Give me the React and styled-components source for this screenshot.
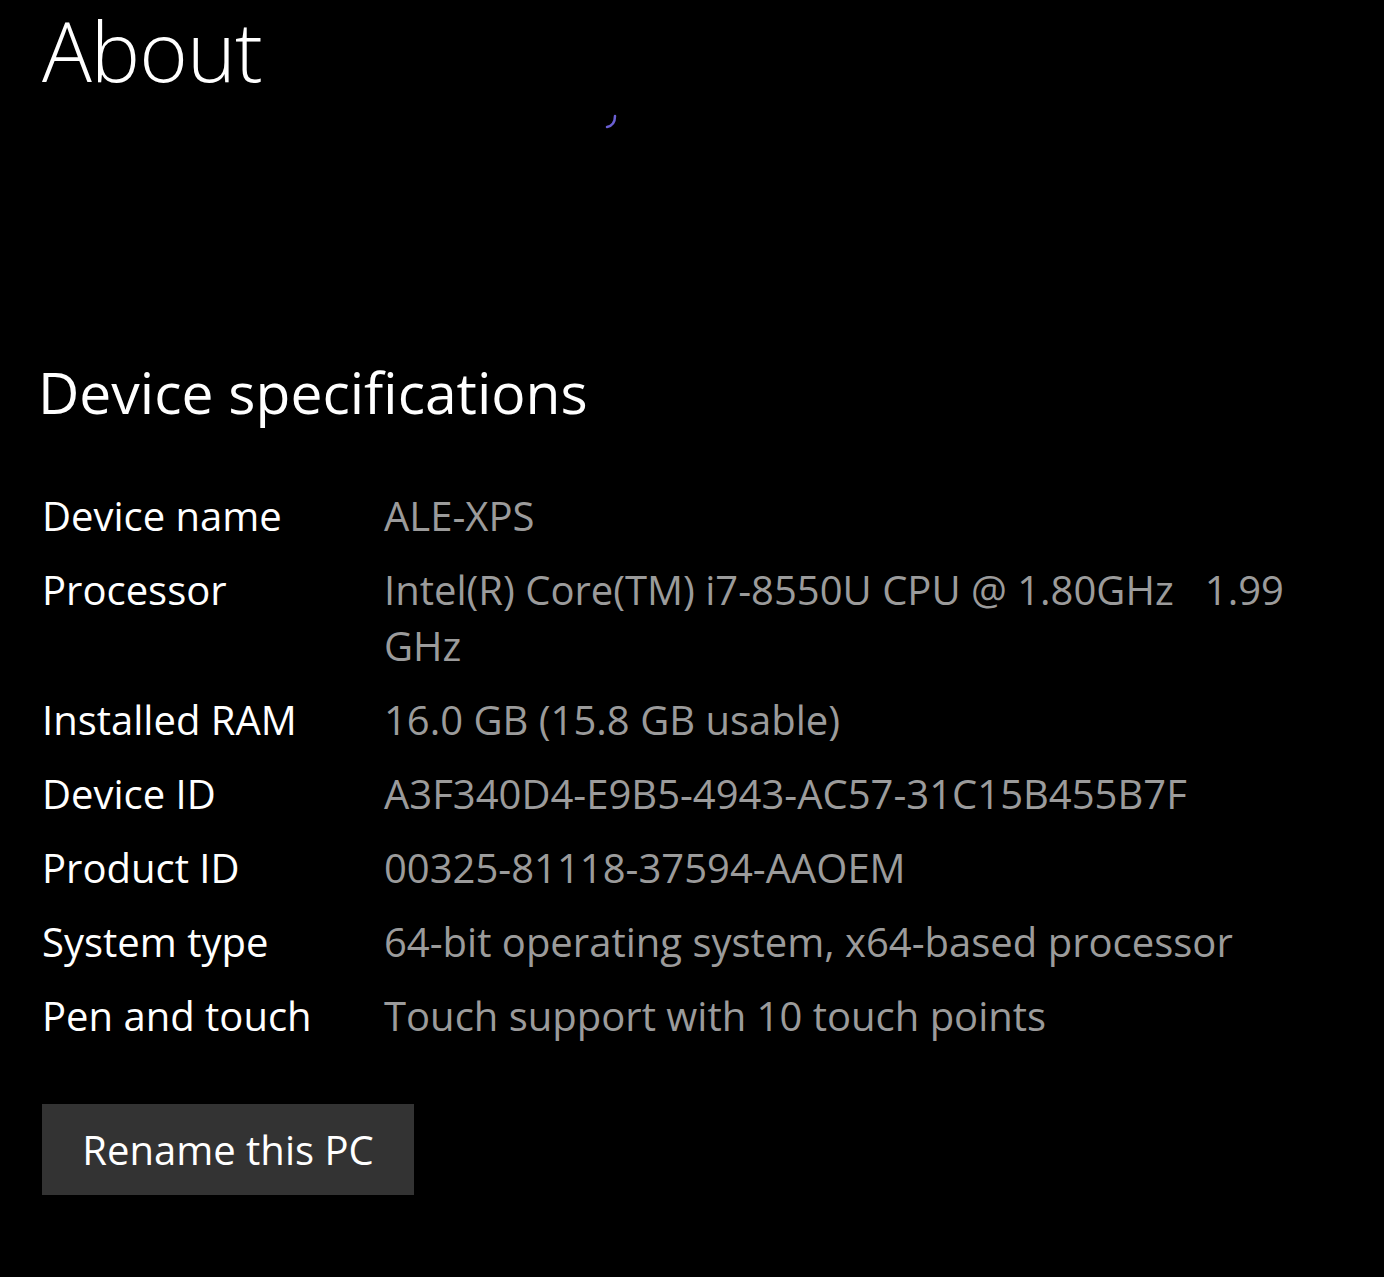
import styled, { createGlobalStyle } from "styled-components";

const GlobalStyle = createGlobalStyle`
  html, body {
    margin: 0;
    padding: 0;
    background: #000;
  }
  body {
    font-family: "Open Sans", "Noto Sans", sans-serif;
    color: #fff;
  }
`;

const specs = [
  { key: "Device name", value: "ALE-XPS" },
  { key: "Processor", value: "Intel(R) Core(TM) i7-8550U CPU @ 1.80GHz   1.99 GHz" },
  { key: "Installed RAM", value: "16.0 GB (15.8 GB usable)" },
  { key: "Device ID", value: "A3F340D4-E9B5-4943-AC57-31C15B455B7F" },
  { key: "Product ID", value: "00325-81118-37594-AAOEM" },
  { key: "System type", value: "64-bit operating system, x64-based processor" },
  { key: "Pen and touch", value: "Touch support with 10 touch points" },
];

export default function App() {
  return (
    <>
      <GlobalStyle />
      <Page>
        <Title>About</Title>
        <Protection>
          <Spinner width="14" height="16" viewBox="0 0 14 16">
            <path d="M11 2 C11 8 8 12 3 13" />
          </Spinner>
        </Protection>
        <SectionTitle>Device specifications</SectionTitle>
        <SpecGrid>
          {specs.map((s) => (
            <SpecRow key={s.key}>
              <SpecKey>{s.key}</SpecKey>
              <SpecValue>{s.value}</SpecValue>
            </SpecRow>
          ))}
        </SpecGrid>
        <RenameButton>Rename this PC</RenameButton>
      </Page>
    </>
  );
}

const Page = styled.div`
  min-height: 1277px;
  padding: 0 0 0 42px;
  box-sizing: border-box;
  background: #000;
`;

const Title = styled.h1`
  margin: 0;
  font-size: 83px;
  font-weight: 300;
  line-height: 100px;
  letter-spacing: -1px;
  color: #fff;
`;

const Protection = styled.div`
  height: 252px;
  padding-left: 562px;
  box-sizing: border-box;
  padding-top: 14px;
`;

const Spinner = styled.svg`
  display: block;
  fill: none;
  stroke: #6a5fd2;
  stroke-width: 2.5;
  stroke-linecap: round;
`;

const SectionTitle = styled.h2`
  margin: 0 0 0 -4px;
  font-size: 57px;
  font-weight: 400;
  line-height: 80px;
  color: #fff;
`;

const SpecGrid = styled.div`
  display: flex;
  flex-direction: column;
  gap: 18px;
  margin-top: 56px;
`;

const SpecRow = styled.div`
  display: grid;
  grid-template-columns: 342px 930px;
  font-size: 40px;
  line-height: 56px;
`;

const SpecKey = styled.div`
  color: #fff;
`;

const SpecValue = styled.div`
  color: #9b9b9b;
  white-space: pre-wrap;
`;

const RenameButton = styled.button`
  display: block;
  margin-top: 60px;
  width: 372px;
  height: 91px;
  border: none;
  padding: 0;
  background: #333;
  color: #fff;
  font-family: "Open Sans", "Noto Sans", sans-serif;
  font-size: 40px;
  cursor: pointer;
`;
